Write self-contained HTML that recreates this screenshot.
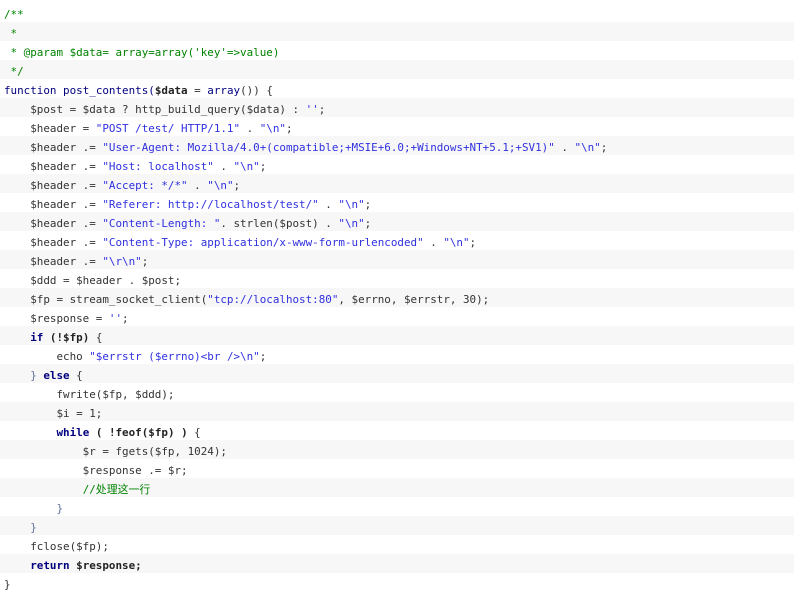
<!DOCTYPE html>
<html><head><meta charset="utf-8"><style>
body{margin:0;background:#fff;width:804px;height:601px;overflow:hidden}
.c{position:absolute;top:3px;left:0;width:794px;font-family:"DejaVu Sans Mono","Noto Sans CJK SC",monospace;font-size:10.9px;color:#333}
.l{height:17px;padding-top:2px;line-height:19px;white-space:pre;padding-left:4px}
.l:nth-child(even){background:#f7f7f7}
.cm{color:#008200}
.k{color:#00007f;font-weight:bold}
.s{color:#3030e0}
.b{font-weight:bold;color:#222}
.g{color:#6070a0}
</style></head><body><div class="c">
<div class="l cm">/**</div>
<div class="l cm"> *</div>
<div class="l cm"> * @param $data= array=array('key'=&gt;value)</div>
<div class="l cm"> */</div>
<div class="l"><span style="color:#00007f">function</span> <span style="color:#00007f">post_contents(</span><span class="b">$data</span> = <span style="color:#00007f">array</span>()) {</div>
<div class="l">    $post = $data ? http_build_query($data) : <span class="s">''</span>;</div>
<div class="l">    $header = <span class="s">"POST /test/ HTTP/1.1"</span> . <span class="s">"\n"</span>;</div>
<div class="l">    $header .= <span class="s">"User-Agent: Mozilla/4.0+(compatible;+MSIE+6.0;+Windows+NT+5.1;+SV1)"</span> . <span class="s">"\n"</span>;</div>
<div class="l">    $header .= <span class="s">"Host: localhost"</span> . <span class="s">"\n"</span>;</div>
<div class="l">    $header .= <span class="s">"Accept: */*"</span> . <span class="s">"\n"</span>;</div>
<div class="l">    $header .= <span class="s">"Referer: http://localhost/test/"</span> . <span class="s">"\n"</span>;</div>
<div class="l">    $header .= <span class="s">"Content-Length: "</span>. strlen($post) . <span class="s">"\n"</span>;</div>
<div class="l">    $header .= <span class="s">"Content-Type: application/x-www-form-urlencoded"</span> . <span class="s">"\n"</span>;</div>
<div class="l">    $header .= <span class="s">"\r\n"</span>;</div>
<div class="l">    $ddd = $header . $post;</div>
<div class="l">    $fp = stream_socket_client(<span class="s">"tcp://localhost:80"</span>, $errno, $errstr, 30);</div>
<div class="l">    $response = <span class="s">''</span>;</div>
<div class="l">    <span class="k">if</span> <span class="b">(!$fp)</span> {</div>
<div class="l">        echo <span class="s">"$errstr ($errno)&lt;br /&gt;\n"</span>;</div>
<div class="l">    <span class="g">}</span> <span class="k">else</span> {</div>
<div class="l">        fwrite($fp, $ddd);</div>
<div class="l">        $i = 1;</div>
<div class="l">        <span class="k">while</span> <span class="b">( !feof($fp) )</span> {</div>
<div class="l">            $r = fgets($fp, 1024);</div>
<div class="l">            $response .= $r;</div>
<div class="l">            <span class="cm">//处理这一行</span></div>
<div class="l">        <span class="g">}</span></div>
<div class="l">    <span class="g">}</span></div>
<div class="l">    fclose($fp);</div>
<div class="l">    <span class="k">return</span> <span class="b">$response;</span></div>
<div class="l">}</div>
</div></body></html>
